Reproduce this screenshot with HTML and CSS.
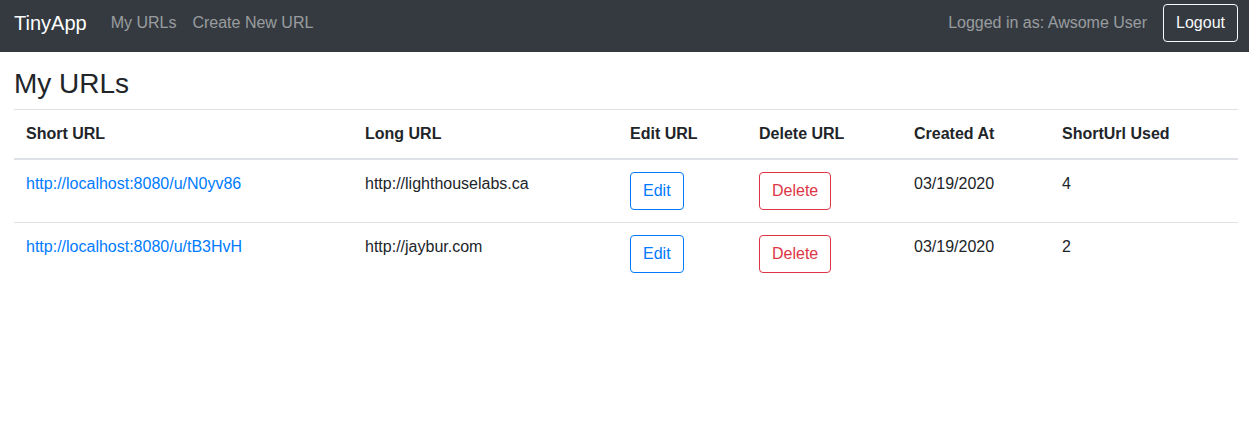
FILE: index.html
```html
<!DOCTYPE html>
<html lang="en">
<head>
<meta charset="utf-8">
<title>TinyApp</title>
<link rel="stylesheet" href="styles.css">
</head>
<body>
<nav class="navbar">
  <a class="brand" href="#">TinyApp</a>
  <a class="nav-link" href="#">My URLs</a>
  <a class="nav-link" href="#">Create New URL</a>
  <div class="nav-right">
    <span class="user">Logged in as: Awsome User</span>
    <button class="btn btn-light">Logout</button>
  </div>
</nav>
<main class="container">
  <h3 class="title">My URLs</h3>
  <table class="table">
    <colgroup>
      <col class="c1"><col class="c2"><col class="c3"><col class="c4"><col class="c5"><col class="c6">
    </colgroup>
    <thead>
      <tr>
        <th>Short URL</th>
        <th>Long URL</th>
        <th>Edit URL</th>
        <th>Delete URL</th>
        <th>Created At</th>
        <th>ShortUrl Used</th>
      </tr>
    </thead>
    <tbody>
      <tr>
        <td><a class="link" href="#">http://localhost:8080/u/N0yv86</a></td>
        <td>http://lighthouselabs.ca</td>
        <td><button class="btn btn-primary">Edit</button></td>
        <td><button class="btn btn-danger">Delete</button></td>
        <td>03/19/2020</td>
        <td>4</td>
      </tr>
      <tr>
        <td><a class="link" href="#">http://localhost:8080/u/tB3HvH</a></td>
        <td>http://jaybur.com</td>
        <td><button class="btn btn-primary">Edit</button></td>
        <td><button class="btn btn-danger">Delete</button></td>
        <td>03/19/2020</td>
        <td>2</td>
      </tr>
    </tbody>
  </table>
</main>
</body>
</html>
```
FILE: styles.css
```css
* { box-sizing: border-box; }
body {
  margin: 0;
  font-family: "Liberation Sans", Arial, sans-serif;
  font-size: 16px;
  line-height: 1.5;
  color: #212529;
  background: #fff;
}
a { text-decoration: none; }
.navbar {
  display: flex;
  align-items: center;
  height: 52px;
  padding: 3px 11px 9px 14px;
  background: #343a40;
}
.brand {
  font-size: 20px;
  line-height: 30px;
  padding: 5px 0;
  margin-right: 16px;
  color: #fff;
}
.nav-link {
  padding: 8px;
  color: rgba(255,255,255,.5);
}
.nav-right {
  margin-left: auto;
  display: flex;
  align-items: center;
  gap: 16px;
}
.user { color: rgba(255,255,255,.5); }
.btn {
  font-family: inherit;
  font-size: 16px;
  line-height: 24px;
  padding: 6px 12px;
  border: 1px solid transparent;
  border-radius: 4px;
  background: transparent;
  cursor: pointer;
}
.btn-light { color: #f8f9fa; border-color: #f8f9fa; }
.btn-primary { color: #007bff; border-color: #007bff; }
.btn-danger { color: #dc3545; border-color: #dc3545; }
.container { padding: 15px 11px 0 14px; }
.title {
  margin: 0 0 8px;
  font-size: 28px;
  font-weight: 500;
  line-height: 1.2;
}
.table {
  width: 100%;
  border-collapse: collapse;
  table-layout: fixed;
}
.c1 { width: 339px; }
.c2 { width: 265px; }
.c3 { width: 129px; }
.c4 { width: 155px; }
.c5 { width: 148px; }
.c6 { width: 188px; }
.table th, .table td {
  padding: 12px;
  text-align: left;
  vertical-align: top;
  border-top: 1px solid #dee2e6;
}
.table thead th {
  font-weight: bold;
  border-bottom: 2px solid #dee2e6;
}
.link { color: #007bff; }
```
